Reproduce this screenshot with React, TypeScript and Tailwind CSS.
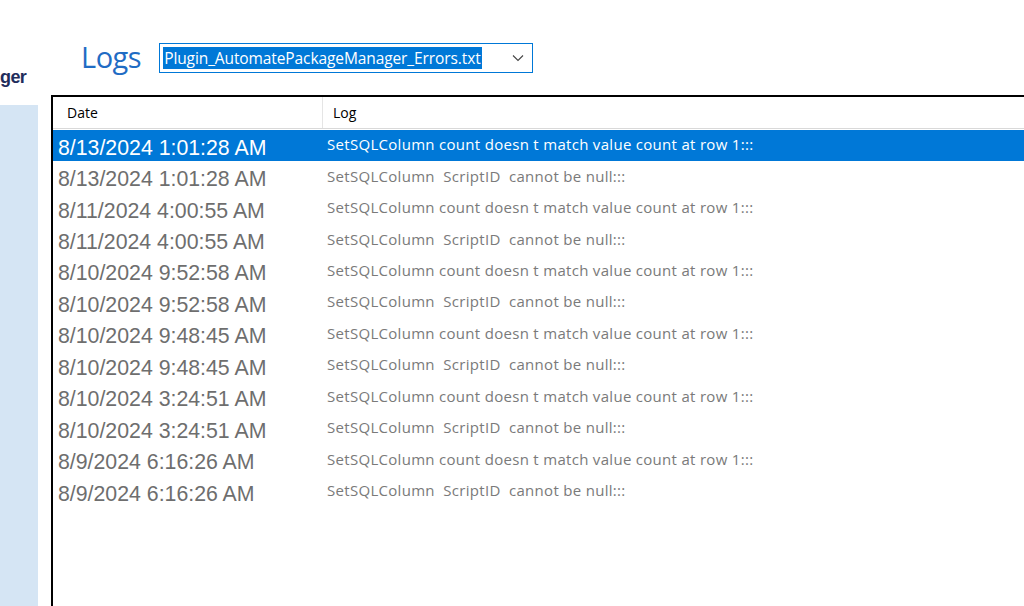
import React from 'react'

const rows = [
  ['8/13/2024 1:01:28 AM', 'SetSQLColumn count doesn t match value count at row 1:::'],
  ['8/13/2024 1:01:28 AM', 'SetSQLColumn  ScriptID  cannot be null:::'],
  ['8/11/2024 4:00:55 AM', 'SetSQLColumn count doesn t match value count at row 1:::'],
  ['8/11/2024 4:00:55 AM', 'SetSQLColumn  ScriptID  cannot be null:::'],
  ['8/10/2024 9:52:58 AM', 'SetSQLColumn count doesn t match value count at row 1:::'],
  ['8/10/2024 9:52:58 AM', 'SetSQLColumn  ScriptID  cannot be null:::'],
  ['8/10/2024 9:48:45 AM', 'SetSQLColumn count doesn t match value count at row 1:::'],
  ['8/10/2024 9:48:45 AM', 'SetSQLColumn  ScriptID  cannot be null:::'],
  ['8/10/2024 3:24:51 AM', 'SetSQLColumn count doesn t match value count at row 1:::'],
  ['8/10/2024 3:24:51 AM', 'SetSQLColumn  ScriptID  cannot be null:::'],
  ['8/9/2024 6:16:26 AM', 'SetSQLColumn count doesn t match value count at row 1:::'],
  ['8/9/2024 6:16:26 AM', 'SetSQLColumn  ScriptID  cannot be null:::'],
]

export default function App() {
  return (
    <div className="w-[1024px] h-[606px] bg-white flex overflow-hidden font-['Open_Sans',sans-serif]">
      {/* left nav, clipped */}
      <div className="w-[38px] shrink-0 flex flex-col">
        <div className="pt-[64px] h-[105px] font-['Liberation_Sans',sans-serif] font-bold text-[18px] tracking-[-0.6px] text-[#1f2d5c] whitespace-nowrap">
          ger
        </div>
        <div className="flex-1 bg-[#d5e5f4]" />
      </div>

      <div className="flex-1 ml-[13px] flex flex-col min-w-0">
        <div className="h-[95px] shrink-0 flex items-start pl-[30px] pt-[40px] gap-[18px]">
          <span className="text-[29px] leading-[34px] text-[#1f6cc4] font-['Open_Sans',sans-serif] tracking-[-0.5px]">
            Logs
          </span>
          <div className="mt-[3px] w-[374px] h-[30px] border border-[#0078d7] flex items-center pl-[3px] pr-[8px]">
            <span className="bg-[#0078d7] text-white text-[15.5px] leading-[22px] h-[22px] px-[1px] tracking-[-0.1px] whitespace-nowrap">
              Plugin_AutomatePackageManager_Errors.txt
            </span>
            <span className="flex-1" />
            <svg width="12" height="8" viewBox="0 0 12 8" className="text-[#444]">
              <path d="M1 1.5 L6 6.5 L11 1.5" fill="none" stroke="currentColor" strokeWidth="1.1" />
            </svg>
          </div>
        </div>

        <div className="flex-1 border-l-2 border-t-2 border-black flex flex-col">
          <div className="h-[32px] shrink-0 flex border-b border-[#d9d9d9] text-[14px] text-black">
            <div className="w-[270px] border-r border-[#e5e5e5] flex items-center pl-[14px]">Date</div>
            <div className="flex-1 flex items-center pl-[10px]">Log</div>
          </div>
          <div className="pt-[1px]">
            {rows.map(([d, l], i) => (
              <div
                key={i}
                className={`h-[31.45px] flex items-center ${i === 0 ? 'bg-[#0078d7] text-white' : 'text-[#6e6e6e]'}`}
              >
                <div className="w-[274px] pl-[5px] pt-[4px] font-['Liberation_Sans',sans-serif] text-[21.3px] leading-[26px] whitespace-nowrap">
                  {d}
                </div>
                <div className={`pb-[3px] text-[15px] leading-[20px] tracking-[0.3px] whitespace-pre ${i === 0 ? '' : 'text-[#7a7a7a]'}`}>{l}</div>
              </div>
            ))}
          </div>
        </div>
      </div>
    </div>
  )
}
